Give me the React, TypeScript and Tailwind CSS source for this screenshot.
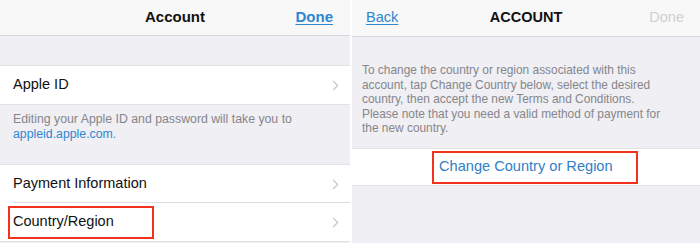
import React from 'react'

const font = { fontFamily: '"Liberation Sans", Arial, sans-serif' }

const notice = [
  'To change the country or region associated with this',
  'account, tap Change Country below, select the desired',
  'country, then accept the new Terms and Conditions.',
  'Please note that you need a valid method of payment for',
  'the new country.',
]

function Chevron() {
  return (
    <svg viewBox="0 0 8 13" className="h-[11px] w-[7px]" fill="none" stroke="#c7c7cc" strokeWidth={1.4} strokeLinecap="round" strokeLinejoin="round">
      <path d="M1.5 1.5l5 5-5 5" />
    </svg>
  )
}

function Row({ label, boxed, divider }: { label: string; boxed?: boolean; divider?: boolean }) {
  return (
    <div className="relative flex h-[38px] items-center bg-white pl-[13px] pr-[11px]">
      <span className="text-[14.5px] text-[#111]">{label}</span>
      <span className="ml-auto">
        <Chevron />
      </span>
      {divider && <div className="absolute bottom-0 left-[13px] right-0 h-px bg-[#dcdce0]" />}
      {boxed && <div className="absolute left-[8px] top-[3px] h-[33px] w-[146px] border-2 border-[#f2321f]" />}
    </div>
  )
}

function LeftPanel() {
  return (
    <div className="flex w-[350px] flex-col bg-[#efeff4]">
      <div className="relative flex h-[36px] items-center justify-center border-b border-[#d6d6da] bg-[#f8f8f8]">
        <span className="text-[15px] font-bold text-[#111]">Account</span>
        <span className="absolute right-[17px] text-[15px] font-bold text-[#2f86d1] underline underline-offset-2">Done</span>
      </div>
      <div className="h-[30px] border-b border-[#e2e2e6]" />
      <Row label="Apple ID" />
      <div className="h-[60px] border-t border-[#e2e2e6] px-[13px] pt-[7px] text-[12.3px] leading-[15px] text-[#86868b]">
        Editing your Apple ID and password will take you to
        <br />
        <span className="text-[#2f86d1]">appleid.apple.com</span>.
      </div>
      <div className="border-t border-[#e2e2e6]">
        <Row label="Payment Information" divider />
        <Row label="Country/Region" boxed />
      </div>
      <div className="flex-1 border-t border-[#e2e2e6]" />
    </div>
  )
}

function RightPanel() {
  return (
    <div className="flex flex-1 flex-col bg-[#efeff4]">
      <div className="relative flex h-[37px] items-center justify-center border-b border-[#d6d6da] bg-[#f8f8f8]">
        <span className="absolute left-[14px] text-[14.5px] text-[#2f86d1] underline underline-offset-2">Back</span>
        <span className="text-[14.5px] font-bold text-[#111]">ACCOUNT</span>
        <span className="absolute right-[16px] text-[14.5px] text-[#d0d0d4]">Done</span>
      </div>
      <div className="h-[111px] whitespace-nowrap pl-[10px] pt-[26px] text-[11.9px] leading-[14.5px] text-[#86868b]">
        {notice.map((line) => (
          <div key={line}>{line}</div>
        ))}
      </div>
      <div className="flex h-[38px] items-center border-y border-[#e2e2e6] bg-white pl-[80px]">
        <div className="flex h-[33px] w-[206px] items-center border-2 border-[#f2321f] pl-[5px]">
          <span className="text-[14.6px] text-[#2f7fc8]">Change Country or Region</span>
        </div>
      </div>
      <div className="flex-1" />
    </div>
  )
}

export default function App() {
  return (
    <div className="flex h-[243px] w-[700px] gap-[2px] overflow-hidden bg-white" style={font}>
      <LeftPanel />
      <RightPanel />
    </div>
  )
}
